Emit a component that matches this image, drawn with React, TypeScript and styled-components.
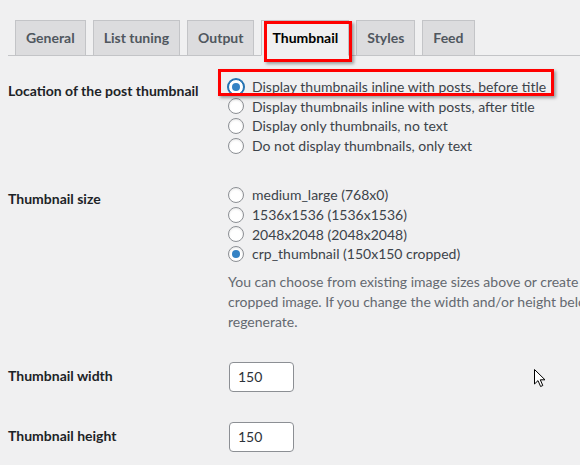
import React from "react";
import styled, { createGlobalStyle } from "styled-components";

const FONT = `"Lato", "Liberation Sans", sans-serif`;

const GlobalStyle = createGlobalStyle`
  html, body {
    margin: 0;
    padding: 0;
    background: #f0f0f1;
    overflow: hidden;
  }
  body {
    font-family: ${FONT};
    font-size: 14px;
    color: #3c434a;
  }
`;

const Page = styled.div`
  position: relative;
  padding: 20px 0 0 8px;
  width: 1200px;
`;

const TabBar = styled.nav`
  display: flex;
  align-items: flex-end;
  border-bottom: 1px solid #c3c4c7;
`;

const Tab = styled.a<{ $active?: boolean }>`
  position: relative;
  display: block;
  margin-left: 7px;
  margin-bottom: ${(p) => (p.$active ? "-1px" : "0")};
  padding: 5px 10px;
  border: 1px solid #c3c4c7;
  border-bottom: ${(p) => (p.$active ? "1px solid #f0f0f1" : "none")};
  background: ${(p) => (p.$active ? "#f0f0f1" : "#dcdcde")};
  color: ${(p) => (p.$active ? "#000" : "#50575e")};
  font-size: 14px;
  font-weight: 700;
  line-height: 24px;
  text-decoration: none;
  white-space: nowrap;
`;

const Highlight = styled.span<{ $l: number; $t: number; $w: number; $h: number }>`
  position: absolute;
  left: ${(p) => p.$l}px;
  top: ${(p) => p.$t}px;
  width: ${(p) => p.$w}px;
  height: ${(p) => p.$h}px;
  box-sizing: border-box;
  border: 3px solid #f00;
  box-shadow: 2px 2px 3px rgba(0, 0, 0, 0.35);
  pointer-events: none;
  z-index: 2;
`;

const FormTable = styled.div`
  margin-top: 6px;
`;

const Row = styled.div`
  display: grid;
  grid-template-columns: 220px 1fr;
`;

const Th = styled.div`
  padding: 20px 10px 20px 0;
  font-weight: 700;
  color: #1d2327;
  line-height: 1.3;
`;

const Td = styled.div`
  padding: 15px 10px 15px 0;
`;

const Fieldset = styled.div`
  display: flex;
  flex-direction: column;
`;

const RadioLabel = styled.label`
  position: relative;
  display: flex;
  align-items: center;
  height: 19.6px;
  line-height: 19.6px;
  color: #3c434a;
  white-space: nowrap;
`;

const Radio = styled.input.attrs({ type: "radio" })<{ $focus?: boolean }>`
  appearance: none;
  box-sizing: border-box;
  width: 16px;
  height: 16px;
  margin: 0 8px 0 0;
  border-radius: 50%;
  border: 1px solid ${(p) => (p.$focus ? "#2271b1" : "#8c8f94")};
  box-shadow: ${(p) => (p.$focus ? "0 0 0 1px #2271b1" : "inset 0 1px 2px rgba(0,0,0,0.1)")};
  background: #fff;
  display: inline-flex;
  align-items: center;
  justify-content: center;
  flex: none;
  &:checked::before {
    content: "";
    width: 8px;
    height: 8px;
    border-radius: 50%;
    background: #3582c4;
  }
`;

const Description = styled.div`
  margin-top: 8px;
  color: #646970;
  line-height: 20px;
`;

const Line = styled.div`
  white-space: nowrap;
`;

const TextInput = styled.input.attrs({ type: "text" })`
  box-sizing: border-box;
  width: 65px;
  height: 30px;
  margin: 0 0 0 1px;
  padding: 0 8px;
  border: 1px solid #8c8f94;
  border-radius: 4px;
  background: #fff;
  color: #2c3338;
  font-family: ${FONT};
  font-size: 14px;
  display: block;
`;

const Cursor = styled.svg`
  position: absolute;
  left: 533px;
  top: 368px;
  z-index: 3;
`;

const tabs = ["General", "List tuning", "Output", "Thumbnail", "Styles", "Feed"];

const locations = [
  "Display thumbnails inline with posts, before title",
  "Display thumbnails inline with posts, after title",
  "Display only thumbnails, no text",
  "Do not display thumbnails, only text",
];

const sizes = [
  "medium_large (768x0)",
  "1536x1536 (1536x1536)",
  "2048x2048 (2048x2048)",
  "crp_thumbnail (150x150 cropped)",
];

export default function App() {
  return (
    <>
      <GlobalStyle />
      <Page>
        <TabBar>
          {tabs.map((t) => (
            <Tab key={t} $active={t === "Thumbnail"}>
              {t}
              {t === "Thumbnail" && <Highlight $l={2} $t={0} $w={88} $h={41} />}
            </Tab>
          ))}
        </TabBar>
        <FormTable>
          <Row>
            <Th>Location of the post thumbnail</Th>
            <Td>
              <Fieldset>
                {locations.map((l, i) => (
                  <RadioLabel key={l}>
                    <Radio name="loc" defaultChecked={i === 0} $focus={i === 0} />
                    {l}
                    {i === 0 && <Highlight $l={-10} $t={-8} $w={336} $h={27} />}
                  </RadioLabel>
                ))}
              </Fieldset>
            </Td>
          </Row>
          <Row>
            <Th>Thumbnail size</Th>
            <Td>
              <Fieldset>
                {sizes.map((s, i) => (
                  <RadioLabel key={s}>
                    <Radio name="size" defaultChecked={i === 3} />
                    {s}
                  </RadioLabel>
                ))}
              </Fieldset>
              <Description>
                <Line>
                  You can choose from existing image sizes above or create a custom size. If you have chosen Custom size above, then enter the width, height and crop settings below. For best results, use a
                </Line>
                <Line>
                  cropped image. If you change the width and/or height below, existing images will not be automatically resized. I recommend using Force Regenerate Thumbnails or Regenerate Thumbnails to
                </Line>
                <Line>regenerate.</Line>
              </Description>
            </Td>
          </Row>
          <Row>
            <Th>Thumbnail width</Th>
            <Td>
              <TextInput defaultValue="150" />
            </Td>
          </Row>
          <Row>
            <Th>Thumbnail height</Th>
            <Td>
              <TextInput defaultValue="150" />
            </Td>
          </Row>
        </FormTable>
        <Cursor width="13" height="20" viewBox="0 0 13 20">
          <path
            d="M1.5 1.5 L1.5 16 L5 12.6 L7.6 18.5 L9.8 17.5 L7.3 11.8 L12 11.8 Z"
            fill="#fff"
            stroke="#000"
            strokeWidth="1"
            strokeLinejoin="miter"
          />
        </Cursor>
      </Page>
    </>
  );
}
